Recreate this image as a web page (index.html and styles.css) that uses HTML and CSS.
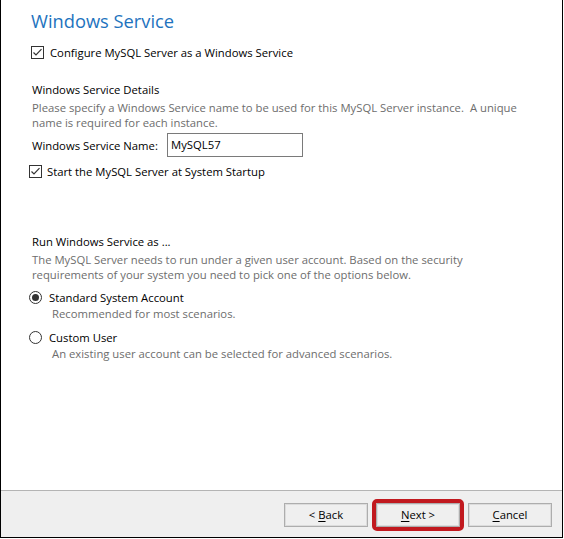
FILE: index.html
```html
<!DOCTYPE html>
<html>
<head>
<meta charset="utf-8">
<link rel="stylesheet" href="styles.css">
</head>
<body>
<div class="window">
  <div class="content">
    <div class="title">Windows Service</div>
    <label class="row row-cb1">
      <span class="cb"><svg width="13" height="13" viewBox="0 0 13 13"><rect x="0.5" y="0.5" width="12" height="12" fill="#fff" stroke="#333"/><polyline points="2.5,6.5 5,9 10.5,3.2" fill="none" stroke="#333" stroke-width="1.2"/></svg></span>
      <span>Configure MySQL Server as a Windows Service</span>
    </label>
    <div class="heading h1">Windows Service Details</div>
    <div class="desc">Please specify a Windows Service name to be used for this MySQL Server instance.<span class="gap">A unique</span><br>name is required for each instance.</div>
    <div class="name-row">
      <span class="name-label">Windows Service Name:</span>
      <span class="input">MySQL57</span>
    </div>
    <label class="row row-cb2">
      <span class="cb"><svg width="13" height="13" viewBox="0 0 13 13"><rect x="0.5" y="0.5" width="12" height="12" fill="#fff" stroke="#333"/><polyline points="2.5,6.5 5,9 10.5,3.2" fill="none" stroke="#333" stroke-width="1.2"/></svg></span>
      <span>Start the MySQL Server at System Startup</span>
    </label>
    <div class="heading h2">Run Windows Service as ...</div>
    <div class="desc">The MySQL Server needs to run under a given user account. Based on the security<br>requirements of your system you need to pick one of the options below.</div>
    <label class="row radio-row r1">
      <span class="radio"><span class="dot"></span></span>
      <span>Standard System Account</span>
    </label>
    <div class="sub">Recommended for most scenarios.</div>
    <label class="row radio-row r2">
      <span class="radio"></span>
      <span>Custom User</span>
    </label>
    <div class="sub">An existing user account can be selected for advanced scenarios.</div>
  </div>
  <div class="footer">
    <button class="btn">&lt; <u>B</u>ack</button>
    <button class="btn next"><u>N</u>ext &gt;</button>
    <button class="btn"><u>C</u>ancel</button>
  </div>
</div>
</body>
</html>
```
FILE: styles.css
```css
html, body {
  margin: 0;
  padding: 0;
  background: #fff;
}
body {
  font-family: "Open Sans", "Noto Sans", sans-serif;
  font-size: 11.3px;
  line-height: 15px;
  color: #000;
}
.window {
  width: 563px;
  height: 538px;
  box-sizing: border-box;
  border: 1px solid #000;
  border-top: none;
  display: flex;
  flex-direction: column;
  background: #fff;
}
.content {
  flex: 1;
  padding: 8px 0 0 30px;
}
.title {
  font-size: 18.3px;
  line-height: 26px;
  color: #1e73be;
}
.row {
  display: flex;
  align-items: center;
  height: 15px;
}
.row-cb1 {
  margin-top: 11px;
  gap: 6px;
}
.cb {
  display: flex;
  width: 13px;
  height: 13px;
}
.heading {
  margin-left: 1px;
}
.h1 { margin-top: 22px; }
.desc {
  margin-top: 3px;
  margin-left: 1px;
  color: #6d6d6d;
}
.gap {
  display: inline-block;
  margin-left: 6px;
}
.name-row {
  display: flex;
  align-items: center;
  margin-top: 3px;
  height: 24px;
  margin-left: 1px;
}
.name-label {
  width: 135px;
}
.input {
  width: 136px;
  height: 24px;
  box-sizing: border-box;
  border: 1px solid #7a7a7a;
  padding: 3px 0 0 3px;
  line-height: 16px;
}
.row-cb2 {
  margin-top: 7px;
  margin-left: -2px;
  gap: 5px;
}
.h2 { margin-top: 55px; }
.radio-row {
  margin-left: -2px;
  gap: 7px;
}
.r1 { margin-top: 8px; }
.r2 { margin-top: 9px; }
.radio {
  width: 13px;
  height: 13px;
  box-sizing: border-box;
  border: 1px solid #333;
  border-radius: 50%;
  display: flex;
  align-items: center;
  justify-content: center;
  background: #fff;
}
.dot {
  width: 7px;
  height: 7px;
  border-radius: 50%;
  background: #333;
}
.sub {
  margin-top: 1px;
  margin-left: 21px;
  color: #6d6d6d;
}
.footer {
  height: 47px;
  box-sizing: border-box;
  border-top: 1px solid #b4b4b4;
  background: #efefef;
  display: flex;
  justify-content: flex-end;
  align-items: flex-start;
  padding: 12px 10px 0 0;
  gap: 8px;
}
.btn {
  width: 84px;
  height: 24px;
  box-sizing: border-box;
  border: 1px solid #adadad;
  box-shadow: inset 0 0 0 1px #dcdcdc;
  background: #efefef;
  font-family: "Open Sans", "Noto Sans", sans-serif;
  font-size: 11.3px;
  line-height: 15px;
  color: #000;
  padding: 0 0 2px 0;
  margin: 0;
  border-radius: 0;
}
.btn u {
  text-decoration-thickness: 1px;
  text-underline-offset: 2px;
}
.next {
  outline: 4px solid #c1191f;
  outline-offset: 0;
  border-radius: 1px;
}
```
